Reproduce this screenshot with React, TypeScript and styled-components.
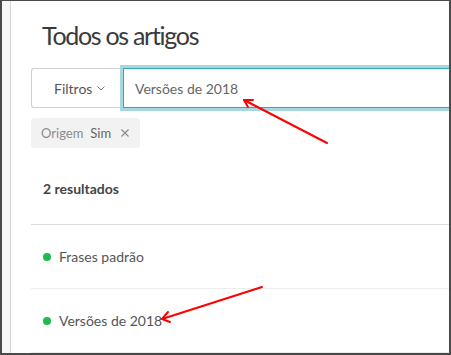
import React from "react";
import styled, { createGlobalStyle } from "styled-components";

const Global = createGlobalStyle`
  html, body { margin: 0; padding: 0; background: #ffffff; }
  * { box-sizing: border-box; }
  body { font-family: Lato, "Open Sans", sans-serif; }
`;

const Frame = styled.div`
  position: relative;
  width: 451px;
  height: 355px;
  border-style: solid;
  border-color: #4a4a4a;
  border-width: 1px 2px 2px 2px;
  display: flex;
  overflow: hidden;
  background: #fff;
`;

const Gutter = styled.div`
  width: 9px;
  flex: none;
  background: #f7f7f7;
  border-right: 1px solid #d6d6d6;
`;

const Main = styled.div`
  flex: 1;
  min-width: 0;
  padding-left: 20px;
  display: flex;
  flex-direction: column;
`;

const Title = styled.h1`
  margin: 18px 0 0 11px;
  font-size: 25px;
  line-height: 32px;
  font-weight: 400;
  letter-spacing: -1.3px;
  color: #3a3a3a;
`;

const Toolbar = styled.div`
  margin-top: 17px;
  display: flex;
  height: 40px;
`;

const FilterButton = styled.div`
  width: 92px;
  flex: none;
  border: 1px solid #cfcfcf;
  border-right: none;
  border-radius: 3px 0 0 3px;
  display: flex;
  align-items: center;
  padding-left: 22px;
  gap: 5px;
  font-size: 14px;
  color: #555;
`;

const SearchBox = styled.div`
  flex: 1;
  margin-right: -20px;
  border: 1px solid #35a7b7;
  box-shadow: 0 0 0 3px #a6d8df;
  display: flex;
  align-items: center;
  padding-left: 11px;
  font-size: 14px;
  color: #666;
`;

const Chip = styled.div`
  margin-top: 10px;
  align-self: flex-start;
  height: 30px;
  width: 109px;
  background: #f2f2f2;
  border-radius: 3px;
  display: flex;
  align-items: center;
  padding-left: 10px;
  font-size: 13px;
  white-space: nowrap;
`;

const ChipLabel = styled.span<{ $strong?: boolean }>`
  color: ${(p) => (p.$strong ? "#666" : "#8c8c8c")};
  margin-right: ${(p) => (p.$strong ? "10px" : "7px")};
`;

const CloseIcon = styled.svg`
  width: 8px;
  height: 8px;
  flex: none;
`;

const Count = styled.div`
  margin: 31px 0 0 12px;
  font-size: 14px;
  line-height: 20px;
  font-weight: 700;
  color: #444;
`;

const List = styled.div`
  margin-top: 25px;
  border-top: 1px solid #dcdcdc;
  margin-right: -20px;
`;

const Row = styled.div`
  height: 64px;
  border-bottom: 1px solid #ececec;
  display: flex;
  align-items: center;
  padding-left: 12px;
  gap: 8px;
  font-size: 14px;
  color: #555;
`;

const Dot = styled.span`
  width: 8px;
  height: 8px;
  border-radius: 50%;
  background: #1fba4d;
  flex: none;
`;

const Overlay = styled.svg`
  position: absolute;
  left: -2px;
  top: -1px;
  width: 451px;
  height: 355px;
  pointer-events: none;
`;

export default function App() {
  return (
    <>
      <Global />
      <Frame>
        <Gutter />
        <Main>
          <Title>Todos os artigos</Title>
          <Toolbar>
            <FilterButton>
              Filtros
              <svg width="8" height="5" viewBox="0 0 8 5">
                <path d="M0.5 0.5 L4 4 L7.5 0.5" fill="none" stroke="#777" strokeWidth="1" />
              </svg>
            </FilterButton>
            <SearchBox>Versões de 2018</SearchBox>
          </Toolbar>
          <Chip>
            <ChipLabel>Origem</ChipLabel>
            <ChipLabel $strong>Sim</ChipLabel>
            <CloseIcon viewBox="0 0 8 8">
              <path d="M0.5 0.5 L7.5 7.5 M7.5 0.5 L0.5 7.5" stroke="#8c8c8c" strokeWidth="1.2" />
            </CloseIcon>
          </Chip>
          <Count>2 resultados</Count>
          <List>
            <Row>
              <Dot />
              Frases padrão
            </Row>
            <Row>
              <Dot />
              Versões de 2018
            </Row>
          </List>
        </Main>
        <Overlay viewBox="0 0 451 355">
          <g stroke="#ff0000" strokeWidth="2" fill="none" strokeLinecap="round">
            <path d="M327 143 L244 100" />
            <path d="M244 100 L253 100 M244 100 L248 107" />
            <path d="M262 287 L162 319" />
            <path d="M162 319 L168 312 M162 319 L170 322" />
          </g>
        </Overlay>
      </Frame>
    </>
  );
}
